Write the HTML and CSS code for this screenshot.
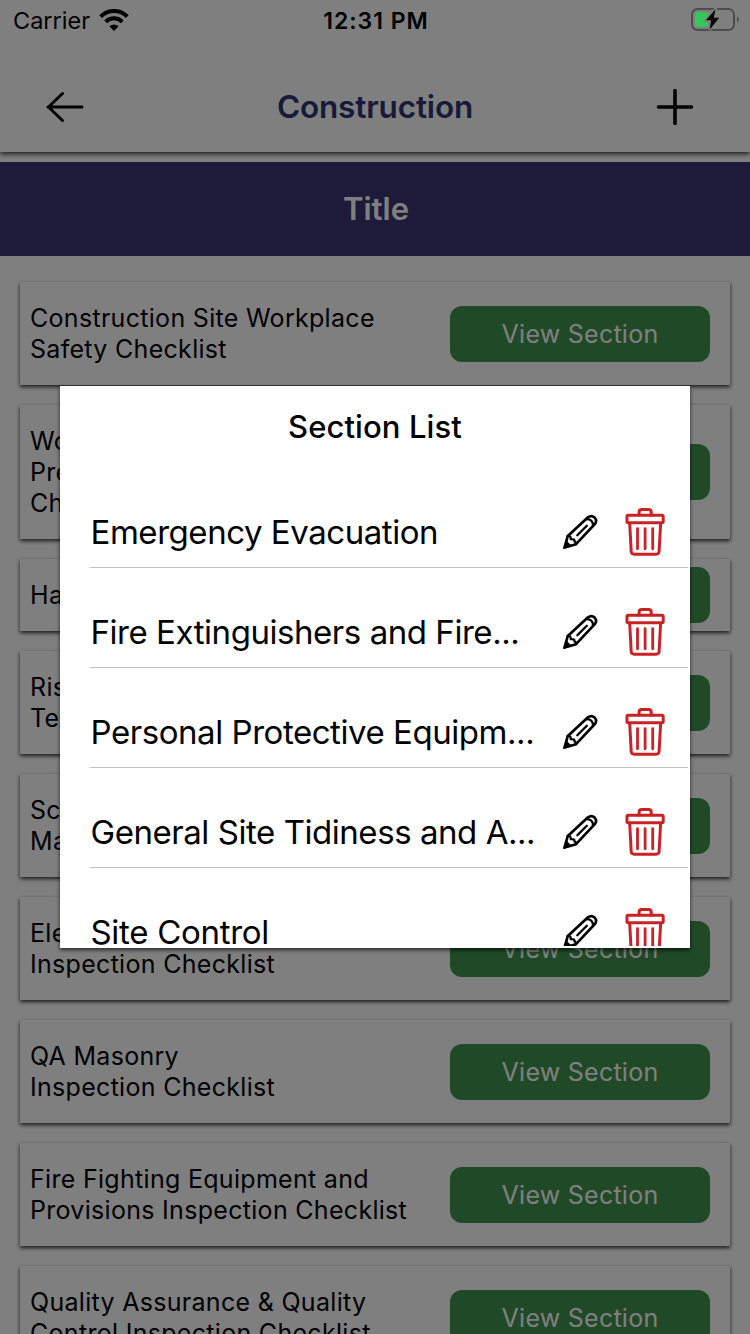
FILE: index.html
```html
<!DOCTYPE html>
<html lang="en">
<head>
<meta charset="utf-8">
<title>Construction</title>
<link rel="stylesheet" href="styles.css">
</head>
<body>
<svg class="defs" aria-hidden="true">
  <symbol id="pencil" viewBox="0 0 36 36">
    <g fill="none" stroke="#000" stroke-width="2.700" stroke-linejoin="round" stroke-linecap="round">
      <path d="M2.500 33.500 5.800 22 26 3.300Q29.300.8 32.400 3.400 35.600 6.500 32.800 10.200L14 30.200Z"/>
      <path d="M24 5.200Q31.300 5 31 12" stroke-width="2.300"/>
      <path d="M15.300 21.300 24.800 11.800" stroke-width="2.300"/>
      <path d="M5.800 22Q9 21.500 8.800 25.200 13 24.800 12.500 27.500 14.200 28 14 30.200" stroke-width="2.300"/>
    </g>
    <path d="M1 35 4 26 10 32.300Z"/>
  </symbol>
  <symbol id="trash" viewBox="0 0 40 48">
    <g fill="none" stroke="#c92225" stroke-width="3" stroke-linejoin="round" stroke-linecap="round">
      <rect x="2" y="7.200" width="36.200" height="7.600" rx="1.200"/>
      <path d="M14.100 7V4.200Q14.100 1.600 16.700 1.600H23.600Q26.200 1.600 26.200 4.200V7"/>
      <path d="M4.700 15.500 6.200 43.500Q6.400 46.200 9.200 46.200H31.100Q33.900 46.200 34.100 43.500L35.600 15.500"/>
      <path d="M12.500 20.700V40.800M20.100 20.700V40.800M27.700 20.700V40.800" stroke-width="2.800"/>
    </g>
  </symbol>
</svg>
<div class="screen">
  <div class="status">
    <div class="carrier">
      <span class="carrier-name">Carrier</span>
      <svg class="wifi" viewBox="0 0 30 22" width="30" height="22">
        <path d="M1.700 7.600A18.500 18.500 0 0 1 28.300 7.600M6.700 12.800A11.700 11.700 0 0 1 23.300 12.800" fill="none" stroke="#000" stroke-width="4"/>
        <path d="M15 22 10.400 17.300Q15 13.500 19.600 17.300Z"/>
      </svg>
    </div>
    <span class="time">12:31 PM</span>
    <svg class="battery" viewBox="0 0 50 24" width="50" height="24">
      <rect x="2" y="2" width="42" height="21" rx="5.500" fill="none" stroke="#4d4d4d" stroke-width="2"/>
      <path d="M47 9.200Q49 10.500 49 12.500 49 14.500 47 15.800Z" fill="#4d4d4d"/>
      <rect x="5" y="5" width="13" height="15" rx="2.500" fill="#34c759"/>
      <path d="M25.500 2.200 16 13.200H21.300L19.500 22.800 29.300 10.800H23.800Z" fill="#000" stroke="#808080" stroke-width="3" paint-order="stroke"/>
    </svg>
  </div>
  <header class="header">
    <svg viewBox="0 0 38 32" width="38" height="32"><path d="M36 16H2M16.500 2.500 2.500 16 16.500 29.500" fill="none" stroke="#000" stroke-width="3" stroke-linecap="round" stroke-linejoin="round"/></svg>
    <h1 class="header-title">Construction</h1>
    <svg viewBox="0 0 38 38" width="38" height="38"><path d="M2.500 19H35.500M19 2.500V35.500" fill="none" stroke="#000" stroke-width="3.600" stroke-linecap="round"/></svg>
  </header>
  <div class="title-bar">Title</div>
  <main class="list">
    <section class="card"><p>Construction Site Workplace<br>Safety Checklist</p><button class="view">View Section</button></section>
    <section class="card"><p>Wo<br>Pre<br>Ch</p><button class="view"></button></section>
    <section class="card"><p>Ha</p><button class="view"></button></section>
    <section class="card"><p>Ris<br>Te</p><button class="view"></button></section>
    <section class="card"><p>Sc<br>Ma</p><button class="view"></button></section>
    <section class="card"><p>Ele<br>Inspection Checklist</p><button class="view">View Section</button></section>
    <section class="card"><p>QA Masonry<br>Inspection Checklist</p><button class="view">View Section</button></section>
    <section class="card"><p>Fire Fighting Equipment and<br>Provisions Inspection Checklist</p><button class="view">View Section</button></section>
    <section class="card"><p>Quality Assurance &amp; Quality<br>Control Inspection Checklist</p><button class="view">View Section</button></section>
  </main>
  <div class="overlay">
    <div class="dialog">
      <h2 class="dialog-title">Section List</h2>
      <div class="sections">
        <div class="row"><span class="row-name">Emergency Evacuation</span><svg class="pencil"><use href="#pencil"/></svg><svg class="trash"><use href="#trash"/></svg></div>
        <div class="row"><span class="row-name">Fire Extinguishers and Fire...</span><svg class="pencil"><use href="#pencil"/></svg><svg class="trash"><use href="#trash"/></svg></div>
        <div class="row"><span class="row-name">Personal Protective Equipm...</span><svg class="pencil"><use href="#pencil"/></svg><svg class="trash"><use href="#trash"/></svg></div>
        <div class="row"><span class="row-name">General Site Tidiness and A...</span><svg class="pencil"><use href="#pencil"/></svg><svg class="trash"><use href="#trash"/></svg></div>
        <div class="row"><span class="row-name row-name-loose">Site Control</span><svg class="pencil"><use href="#pencil"/></svg><svg class="trash"><use href="#trash"/></svg></div>
      </div>
    </div>
  </div>
</div>
</body>
</html>
```
FILE: styles.css
```css
* { box-sizing: border-box; }
body { margin: 0; font-family: Inter, "Liberation Sans", sans-serif; color: #000; }
h1, h2, p { margin: 0; }
svg { display: block; flex: none; }
.defs { position: absolute; width: 0; height: 0; }
.screen { position: relative; width: 750px; height: 1334px; overflow: hidden; background: #fff; display: flex; flex-direction: column; }
.status { position: relative; z-index: 2; height: 40px; flex: none; display: grid; grid-template-columns: 1fr auto 1fr; align-items: center; padding: 0 11px 0 13px; white-space: nowrap; }
.carrier { display: flex; align-items: center; gap: 9px; }
.carrier-name { font-size: 23.5px; letter-spacing: 0; line-height: 40px; padding-top: 1px; }
.wifi { margin-top: -2px; }
.time { font-size: 23px; font-weight: 600; letter-spacing: 1px; line-height: 40px; padding-top: 1px; }
.battery { justify-self: end; margin-right: -1px; margin-top: -3px; }
.header { height: 152px; margin-top: -40px; flex: none; display: flex; align-items: center; justify-content: space-between; padding: 62px 56px 0 46px; box-shadow: 0 2px 5px rgba(0, 0, 0, .8); }
.header-title { padding-left: 10px; font-size: 31.5px; font-weight: 600; line-height: 40px; letter-spacing: -.15px; color: #303474; }
.title-bar { margin-top: 10px; height: 94px; flex: none; display: flex; align-items: center; justify-content: center; background: #3c3474; color: #fff; font-size: 31px; font-weight: 600; padding: 0 0 2px 2px; }
.list { padding: 26px 20px 0; display: flex; flex-direction: column; gap: 20px; }
.card { flex: none; padding: 20.5px 20px 20.5px 10px; display: flex; align-items: center; justify-content: space-between; background: #fff; box-shadow: 0 2px 4px rgba(0, 0, 0, .8); font-size: 25px; line-height: 31px; letter-spacing: .3px; white-space: nowrap; }
.view { width: 260px; height: 56px; margin: -13px 0; padding: 0; border: 0; border-radius: 12px; background: #40944e; color: #fff; font: 25px/56px Inter, sans-serif; letter-spacing: .25px; }
.overlay { position: absolute; inset: 0; background: rgba(0, 0, 0, .5); display: flex; align-items: center; justify-content: center; }
.dialog { width: 630px; height: 562px; background: #fff; padding-bottom: 2px; display: flex; flex-direction: column; box-shadow: 0 2px 4px rgba(0, 0, 0, .7); }
.dialog-title { height: 82px; flex: none; text-align: center; font-size: 31px; font-weight: 500; line-height: 82px; letter-spacing: .1px; }
.sections { flex: 1; min-height: 0; padding: 0 2px 0 30px; overflow: hidden; }
.row { height: 100px; padding: 29px 23px 0 0; display: flex; align-items: center; border-bottom: 1px solid #c2c2c2; }
.row-name { flex: 1; padding-left: .5px; font-size: 33px; line-height: 40px; letter-spacing: -.45px; white-space: nowrap; }
.row-name-loose { letter-spacing: -.3px; }
.pencil { width: 36px; height: 36px; margin-right: 27px; }
.trash { width: 40px; height: 48px; }
```
